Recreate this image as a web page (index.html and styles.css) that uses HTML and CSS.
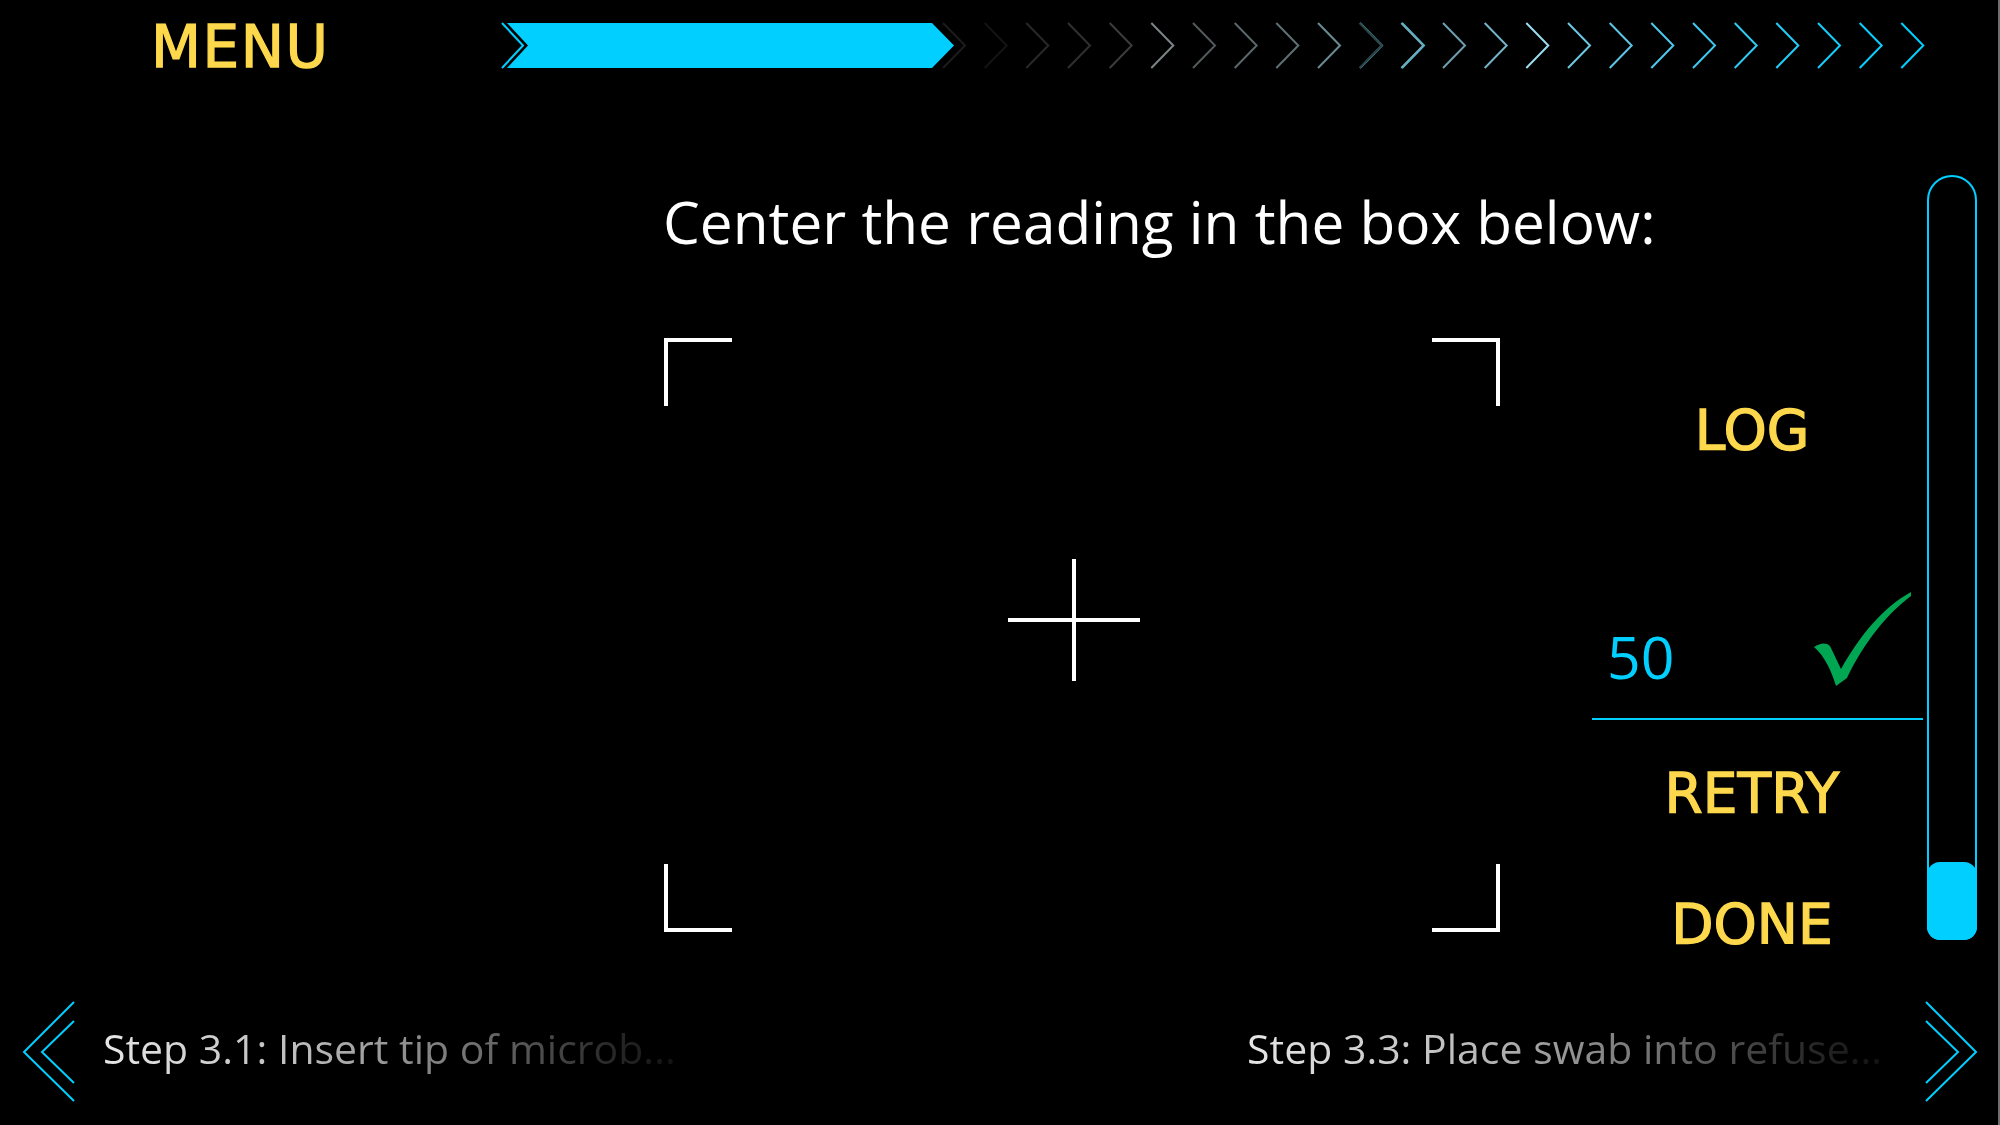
FILE: index.html
```html
<!DOCTYPE html>
<html lang="en">
<head>
<meta charset="UTF-8" />
<title>Step 3.2</title>
<link rel="stylesheet" href="styles.css">
</head>
<body>

<div class="screen">
  <header class="topbar">
    <div class="menu">MENU</div>
    <svg class="progress" width="1430" height="50" viewBox="0 0 1430 50">
      <defs>
        <polyline id="chev" points="0,3 22,25.5 0,48" fill="none" stroke-width="2" />
      </defs>
      <polyline points="2,3 23,25.5 2,48" fill="none" stroke="#00cfff" stroke-width="2" />
      <polygon points="7,3 432,3 454,25.5 432,48 7,48 28,25.5" fill="#00cfff" />
      <use href="#chev" x="860" stroke="#1fd4ff" />
      <use href="#chev" x="902" stroke="#1fd4ff" />
      <!-- steps still to go -->
      <use href="#chev" x="443" stroke="#1c1c1c" />
      <use href="#chev" x="484.7" stroke="#141414" />
      <use href="#chev" x="526.3" stroke="#282828" />
      <use href="#chev" x="568" stroke="#303030" />
      <use href="#chev" x="609.7" stroke="#3c3c3c" />
      <use href="#chev" x="651.3" stroke="#7c8486" />
      <use href="#chev" x="693" stroke="#525a5c" />
      <use href="#chev" x="734.7" stroke="#5a686c" />
      <use href="#chev" x="776.3" stroke="#5e7074" />
      <use href="#chev" x="818" stroke="#6a8a94" />
      <use href="#chev" x="859.7" stroke="#33403f" />
      <use href="#chev" x="901.3" stroke="#78a6b2" />
      <use href="#chev" x="943" stroke="#6e9fae" />
      <use href="#chev" x="984.7" stroke="#74b4c6" />
      <use href="#chev" x="1026.3" stroke="#9adcee" />
      <use href="#chev" x="1068" stroke="#6cc8e2" />
      <use href="#chev" x="1109.7" stroke="#5cc6e6" />
      <use href="#chev" x="1151.3" stroke="#4ec8ec" />
      <use href="#chev" x="1193" stroke="#3ec8f0" />
      <use href="#chev" x="1234.7" stroke="#30caf4" />
      <use href="#chev" x="1276.3" stroke="#22ccf8" />
      <use href="#chev" x="1318" stroke="#14cdfc" />
      <use href="#chev" x="1359.7" stroke="#0acfff" />
      <use href="#chev" x="1401.3" stroke="#00cfff" />
    </svg>
  </header>

  <main class="stage">
    <section class="reader">
      <h1 class="prompt">Center the reading in the box below:</h1>
      <div class="target">
        <div class="corner tl"></div>
        <div class="corner tr"></div>
        <div class="corner bl"></div>
        <div class="corner br"></div>
        <div class="cross"></div>
      </div>
    </section>

    <aside class="controls">
      <div class="action">LOG</div>
      <div class="reading">
        <span class="value">50</span>
        <svg class="check" width="98" height="94" viewBox="0 0 98 94">
          <path d="M0 55 C6 51 12 50 16 54 L27 77 C45 45 68 16 97 0 L97 4 C75 20 50 50 33 86 L22 94 C18 80 10 63 0 55 Z" fill="#00a651" />
        </svg>
      </div>
      <div class="action retry">RETRY</div>
      <div class="action done">DONE</div>
    </aside>

    <div class="slider"><div class="thumb"></div></div>
  </main>

  <footer class="steps">
    <div class="step">
      <svg width="54" height="104" viewBox="0 0 54 104" fill="none" stroke="#00cfff" stroke-width="2">
        <polyline points="52,2 2,52 52,101" />
        <polyline points="52,21 20,52 52,83" />
      </svg>
      <span class="step-text">Step 3.1: Insert tip of microb...</span>
    </div>
    <div class="step next">
      <span class="step-text">Step 3.3: Place swab into refuse...</span>
      <svg width="54" height="104" viewBox="0 0 54 104" fill="none" stroke="#00cfff" stroke-width="2">
        <polyline points="2,2 52,52 2,101" />
        <polyline points="2,21 34,52 2,83" />
      </svg>
    </div>
  </footer>
</div>

</body>
</html>
```

FILE: styles.css
```css
body {
  margin: 0;
  background-color: #000;
  font-family: "Open Sans", sans-serif;
  color: #fff;
}
.screen {
  width: 2000px;
  height: 1125px;
  box-sizing: border-box;
  border-right: 2px solid #6e6e6e;
  display: grid;
  grid-template-rows: 90px 890px 145px;
  overflow: hidden;
}

/* top bar */
.topbar {
  display: grid;
  grid-template-columns: 500px 1fr;
  align-items: start;
}
.menu {
  padding: 13px 0 0 151px;
  font-family: "DejaVu Sans", sans-serif;
  font-size: 58px;
  color: #fdd84c;
  -webkit-text-stroke: 1.3px #fdd84c;
  letter-spacing: 1.5px;
}
.progress {
  display: block;
  margin-top: 20px;
}

/* middle */
.stage {
  display: grid;
  grid-template-columns: 836px 1fr 50px;
  padding: 0 21px 0 664px;
}
.reader {
  padding-top: 92px;
}
.prompt {
  margin: 0 0 0 -1px;
  font-size: 58.5px;
  font-weight: 400;
  line-height: 79px;
  white-space: nowrap;
}
.target {
  margin-top: 77px;
  height: 594px;
  display: grid;
  grid-template-columns: 68px 1fr 68px;
  grid-template-rows: 68px 1fr 68px;
}
.corner {
  border: 0 solid #fff;
}
.corner.tl { grid-area: 1 / 1; border-width: 4px 0 0 4px; }
.corner.tr { grid-area: 1 / 3; border-width: 4px 4px 0 0; }
.corner.bl { grid-area: 3 / 1; border-width: 0 0 4px 4px; }
.corner.br { grid-area: 3 / 3; border-width: 0 4px 4px 0; }
.cross {
  grid-area: 2 / 2;
  place-self: center;
  width: 132px;
  height: 122px;
  margin: 0 16px 30px 0;
  background:
    linear-gradient(#fff, #fff) center / 4px 100% no-repeat,
    linear-gradient(#fff, #fff) center / 100% 4px no-repeat;
}

.controls {
  margin: 0 4px 0 92px;
  padding-top: 308px;
  display: flex;
  flex-direction: column;
}
.action {
  font-family: "DejaVu Sans", sans-serif;
  font-size: 55px;
  color: #fdd84c;
  -webkit-text-stroke: 1.3px #fdd84c;
  text-align: center;
  padding-right: 11px;
}
.reading {
  margin-top: 130px;
  display: flex;
  justify-content: space-between;
  align-items: flex-end;
  padding: 0 11px 22px 15px;
  border-bottom: 2px solid #00cfff;
}
.value {
  font-size: 59px;
  color: #00cfff;
}
.check {
  display: block;
  margin-bottom: 10px;
}
.retry {
  margin-top: 41px;
}
.done {
  margin-top: 67px;
}

.slider {
  margin-top: 85px;
  height: 765px;
  box-sizing: border-box;
  border: 2px solid #00cfff;
  border-radius: 25px 25px 14px 14px;
  display: flex;
  flex-direction: column;
  justify-content: flex-end;
}
.thumb {
  height: 78px;
  margin: 0 -2px -2px;
  background-color: #00cfff;
  border-radius: 13px;
}

/* bottom step links */
.steps {
  display: flex;
  justify-content: space-between;
  align-items: flex-start;
  padding: 20px 20px 0 22px;
}
.step {
  display: flex;
  align-items: center;
  gap: 27px;
}
.step.next {
  gap: 42px;
}
.step svg {
  display: block;
}
.step-text {
  font-size: 41px;
  margin-bottom: 9px;
  white-space: nowrap;
  background: linear-gradient(90deg, #e6e6e6 0%, #bcbcbc 35%, #707070 65%, #2a2a2a 88%, #111 100%);
  -webkit-background-clip: text;
  background-clip: text;
  color: transparent;
}
```
